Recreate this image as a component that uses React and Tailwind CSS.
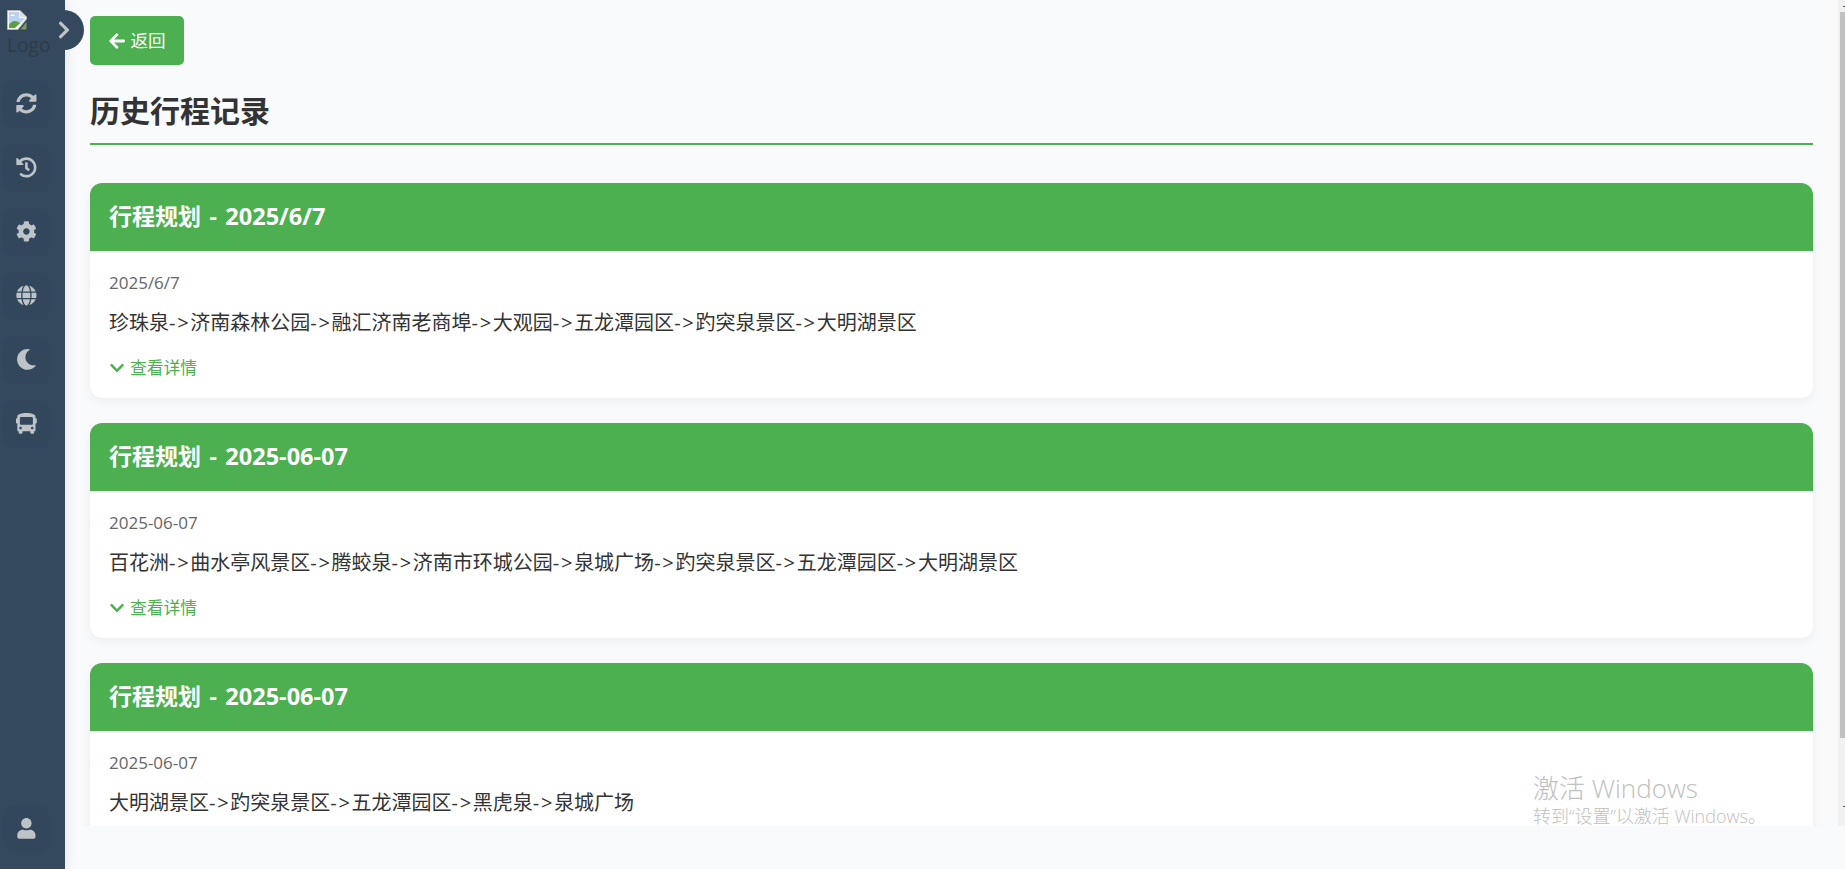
import React from 'react';
import { FaSyncAlt, FaHistory, FaCog, FaGlobe, FaMoon, FaBus, FaUser, FaArrowLeft, FaChevronDown, FaChevronRight } from 'react-icons/fa';

const font = "font-['Open_Sans','Noto_Sans_CJK_SC',sans-serif]";

const trips = [
  { date: '2025/6/7', stops: ['珍珠泉', '济南森林公园', '融汇济南老商埠', '大观园', '五龙潭园区', '趵突泉景区', '大明湖景区'] },
  { date: '2025-06-07', stops: ['百花洲', '曲水亭风景区', '腾蛟泉', '济南市环城公园', '泉城广场', '趵突泉景区', '五龙潭园区', '大明湖景区'] },
  { date: '2025-06-07', stops: ['大明湖景区', '趵突泉景区', '五龙潭园区', '黑虎泉', '泉城广场'] },
];

const NavButton = ({ icon: Icon }) => (
  <button className="w-[45px] h-[45px] ml-1 rounded-xl bg-[#32475b] shadow-[0_1px_4px_rgba(0,0,0,0.05)] flex items-center justify-center text-[#bdc3c7] text-[20.8px]">
    <Icon />
  </button>
);

const BrokenImage = () => (
  <svg width="20" height="20" viewBox="0 0 20 20">
    <path d="M0.5 0.5H13L19.5 7V9L11 19.5H0.5Z" fill="#f4f4f4" stroke="#b5b5b5" />
    <path d="M2 2H12V8H18L12 15H2Z" fill="#bcd0f0" />
    <path d="M3 6C4 4 7 4 8 6Z" fill="#fff" />
    <path d="M2 18V15C5 10 9 10 13 13L8 18Z" fill="#5aa13c" />
    <path d="M13 1L19 7H13Z" fill="#dedede" />
    <path d="M19.5 12V19.5H13.5Z" fill="#7f9c5a" />
  </svg>
);

const TripCard = ({ trip }) => (
  <section className="rounded-xl bg-white shadow-[0_4px_12px_rgba(0,0,0,0.05)] overflow-hidden shrink-0">
    <h3 className="h-[68px] px-[19px] flex items-center bg-[#4caf50] text-white text-[23px] font-bold">
      <span className="[word-spacing:2.5px] whitespace-pre">行程规划 - <span className="text-[23.5px]">{trip.date}</span></span>
    </h3>
    <div className="px-[19px] pt-[20px] pb-[17px]">
      <p className="text-[17px] leading-[24px] text-[#666]">{trip.date}</p>
      <p className="mt-[14px] text-[20px] leading-[28px] text-[#333]">
        {trip.stops.map((stop, i) => (
          <React.Fragment key={i}>
            {i > 0 && <span className="tracking-[1.7px]">{'->'}</span>}
            {stop}
          </React.Fragment>
        ))}
      </p>
      <button className="mt-[17px] h-[27px] flex items-center gap-[5px] text-[16.8px] text-[#4caf50]">
        <FaChevronDown className="text-[16px]" />
        查看详情
      </button>
    </div>
  </section>
);

export default function App() {
  return (
    <div className={`${font} relative flex h-screen overflow-hidden bg-[#f9fafc]`}>
      <aside className="relative z-10 w-[65px] shrink-0 bg-[#34495e] flex flex-col pb-[18px] shadow-[2px_0_12px_rgba(0,0,0,0.08)]">
        <div className="pl-[7px] pt-[10px] h-[81px] text-[#2f3b48] text-[19.2px] leading-[24px]">
          <BrokenImage />
          <span className="block mt-[3px]">Logo</span>
        </div>
        <nav className="flex flex-col gap-[19px]">
          <NavButton icon={FaSyncAlt} />
          <NavButton icon={FaHistory} />
          <NavButton icon={FaCog} />
          <NavButton icon={FaGlobe} />
          <NavButton icon={FaMoon} />
          <NavButton icon={FaBus} />
        </nav>
        <div className="mt-auto">
          <NavButton icon={FaUser} />
        </div>
        <button className="absolute left-[44px] top-[10px] w-[40px] h-[40px] rounded-full bg-[#34495e] flex items-center justify-center text-[#bdc3c7] text-[20px]">
          <FaChevronRight />
        </button>
      </aside>

      <div className="flex-1 min-w-0">
        <div className="h-[826px] flex overflow-hidden">
          <main className="flex-1 min-w-0 pl-[25px] pr-[25px] pt-4 flex flex-col">
            <button className="self-start shrink-0 w-[94px] h-[49px] rounded-[5px] bg-[#4caf50] flex items-center justify-center gap-[4px] text-white text-[17.6px]">
              <FaArrowLeft className="text-[18px]" />
              返回
            </button>
            <h2 className="mt-[22px] shrink-0 h-[58px] border-b-2 border-[#4caf50] text-[#333] text-[30px] leading-[47px] font-bold">
              历史行程记录
            </h2>
            <div className="mt-[38px] shrink-0 flex flex-col gap-[25px]">
              {trips.map((trip, i) => <TripCard key={i} trip={trip} />)}
            </div>
          </main>
          <div className="w-[7px] shrink-0 bg-[#f1f1f1] flex flex-col items-end">
            <div className="h-[12px] flex items-center justify-end">
              <span className="w-[2px] h-[1px] bg-[#555]" />
            </div>
            <div className="h-[726px] w-[5px] bg-[#c1c1c1]" />
            <div className="mt-[68px] w-[2px] h-[1px] bg-[#555]" />
          </div>
        </div>
      </div>

      <div className="absolute left-[1533px] top-[773px] text-[#c0c0c0] font-light pointer-events-none">
        <p className="text-[26px] leading-[30px]">激活 Windows</p>
        <p className="text-[18px] leading-[26px]">转到“设置”以激活 Windows。</p>
      </div>
    </div>
  );
}
